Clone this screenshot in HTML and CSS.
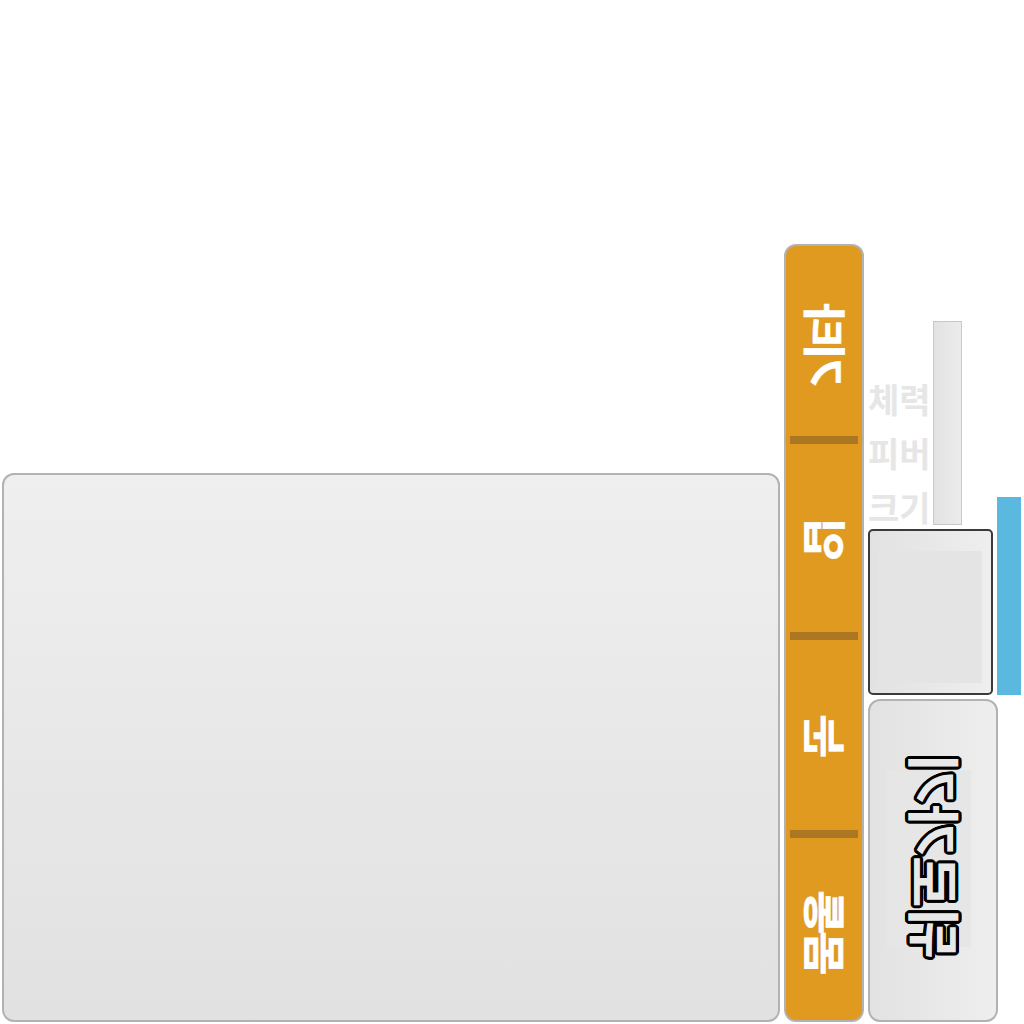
FILE: index.html
```html
<!DOCTYPE html>
<html lang="ko">
<head>
    <meta charset="utf-8">
    <title>캐릭터</title>
    <link rel="stylesheet" href="styles.css">
</head>
<body>

<div class="page">
    <div class="preview"></div>

    <div class="tabs">
        <div class="tab tab-etc"><span class="flip">기타</span></div>
        <div class="tab-line"></div>
        <div class="tab tab-mouth"><span class="flip">입</span></div>
        <div class="tab-line"></div>
        <div class="tab tab-eye"><span class="flip">눈</span></div>
        <div class="tab-line"></div>
        <div class="tab tab-body"><span class="flip">몸통</span></div>
    </div>

    <div class="side">
        <div class="side-top">
            <div class="side-main">
                <div class="stats">
                    <div class="stat-names">
                        <div>체력</div>
                        <div>피버</div>
                        <div>크기</div>
                    </div>
                    <div class="stat-bar"></div>
                </div>
                <div class="card"><div class="card-inner"></div></div>
            </div>
            <div class="blue-bar"></div>
        </div>
        <div class="back">
            <div class="back-inner"></div>
            <span class="flip back-text">뒤로가기</span>
        </div>
    </div>
</div>

</body>
</html>
```

FILE: styles.css
```css
html, body {
    margin : 0;
    padding : 0;
    background-color : #fff;
}
.page {
    box-sizing : border-box;
    width : 1024px;
    height : 1024px;
    padding : 0 2px 2px 2px;
    display : flex;
    align-items : flex-end;
    font-family : "Noto Sans CJK KR", "Noto Sans", sans-serif;
    font-weight : bold;
}
.preview {
    box-sizing : border-box;
    width : 778px;
    height : 549px;
    border : 2px solid #b2b2b2;
    border-radius : 12px;
    background : linear-gradient(to bottom, #efefef, #e1e1e1);
}
.tabs {
    box-sizing : border-box;
    width : 80px;
    height : 778px;
    margin-left : 4px;
    padding : 0 4px;
    border : 2px solid #b2b2b2;
    border-radius : 12px;
    background-color : #df9a1f;
    display : flex;
    flex-direction : column;
    color : #fff;
    font-size : 48px;
}
.tab {
    box-sizing : border-box;
    display : flex;
    align-items : center;
    justify-content : center;
}
.tab .flip {
    transform : translateX(3px) scale(0.9, -1);
    -webkit-text-stroke : 0.6px #fff;
}
.tab-etc {
    height : 190px;
    padding-top : 13px;
    letter-spacing : -4px;
}
.tab-mouth {
    height : 188px;
    padding-top : 2px;
}
.tab-eye {
    height : 190px;
    padding-top : 2px;
}
.tab-body {
    flex : 1;
    padding-top : 10px;
    letter-spacing : -3px;
}
.tab-line {
    flex : none;
    height : 8px;
    background-color : #ab7722;
}
/* text runs bottom to top and is mirrored */
.flip {
    writing-mode : vertical-rl;
    text-orientation : sideways;
    transform : scaleY(-1);
    line-height : 1;
    white-space : nowrap;
}
.side {
    width : 153px;
    margin-left : 4px;
}
.side-top {
    display : flex;
    align-items : flex-end;
    gap : 4px;
}
.side-main {
    width : 125px;
}
.stats {
    display : flex;
    align-items : flex-end;
    gap : 3px;
    height : 204px;
}
.stat-names {
    flex : none;
    width : 68px;
    margin-right : -6px;
    margin-bottom : -9px;
    color : #e6e6e6;
    font-size : 34px;
    line-height : 54px;
}
.stat-bar {
    box-sizing : border-box;
    width : 29px;
    height : 204px;
    border : 1px solid #c8c8c8;
    background : linear-gradient(to right, #e2e2e2, #ececec);
}
.card {
    box-sizing : border-box;
    height : 166px;
    margin-top : 4px;
    padding : 20px 9px 10px 8px;
    border : 2px solid #3a3a3a;
    border-radius : 5px;
    background : linear-gradient(to right, #e2e2e2, #eeeeee);
}
.card-inner {
    height : 100%;
    background-color : #e4e4e4;
}
.blue-bar {
    width : 24px;
    height : 198px;
    background-color : #5bb9e0;
}
.back {
    box-sizing : border-box;
    width : 130px;
    height : 323px;
    margin-top : 4px;
    border : 2px solid #b2b2b2;
    border-radius : 12px;
    background : linear-gradient(to right, #e2e2e2, #eeeeee);
    display : grid;
    place-items : center;
}
.back-inner {
    grid-area : 1 / 1;
    width : 84px;
    height : 177px;
    margin : 0 8px 4px 0;
    background-color : #e6e6e6;
}
.back-text {
    grid-area : 1 / 1;
    color : #e8e8e8;
    font-size : 56px;
    transform : translate(3px, -4px) scale(0.96, -1);
    /* round black outline, drawn outside the letters */
    text-shadow :
        3px 0 0 #000, 2.8px 1.1px 0 #000, 2.1px 2.1px 0 #000, 1.1px 2.8px 0 #000,
        0 3px 0 #000, -1.1px 2.8px 0 #000, -2.1px 2.1px 0 #000, -2.8px 1.1px 0 #000,
        -3px 0 0 #000, -2.8px -1.1px 0 #000, -2.1px -2.1px 0 #000, -1.1px -2.8px 0 #000,
        0 -3px 0 #000, 1.1px -2.8px 0 #000, 2.1px -2.1px 0 #000, 2.8px -1.1px 0 #000;
}
```
